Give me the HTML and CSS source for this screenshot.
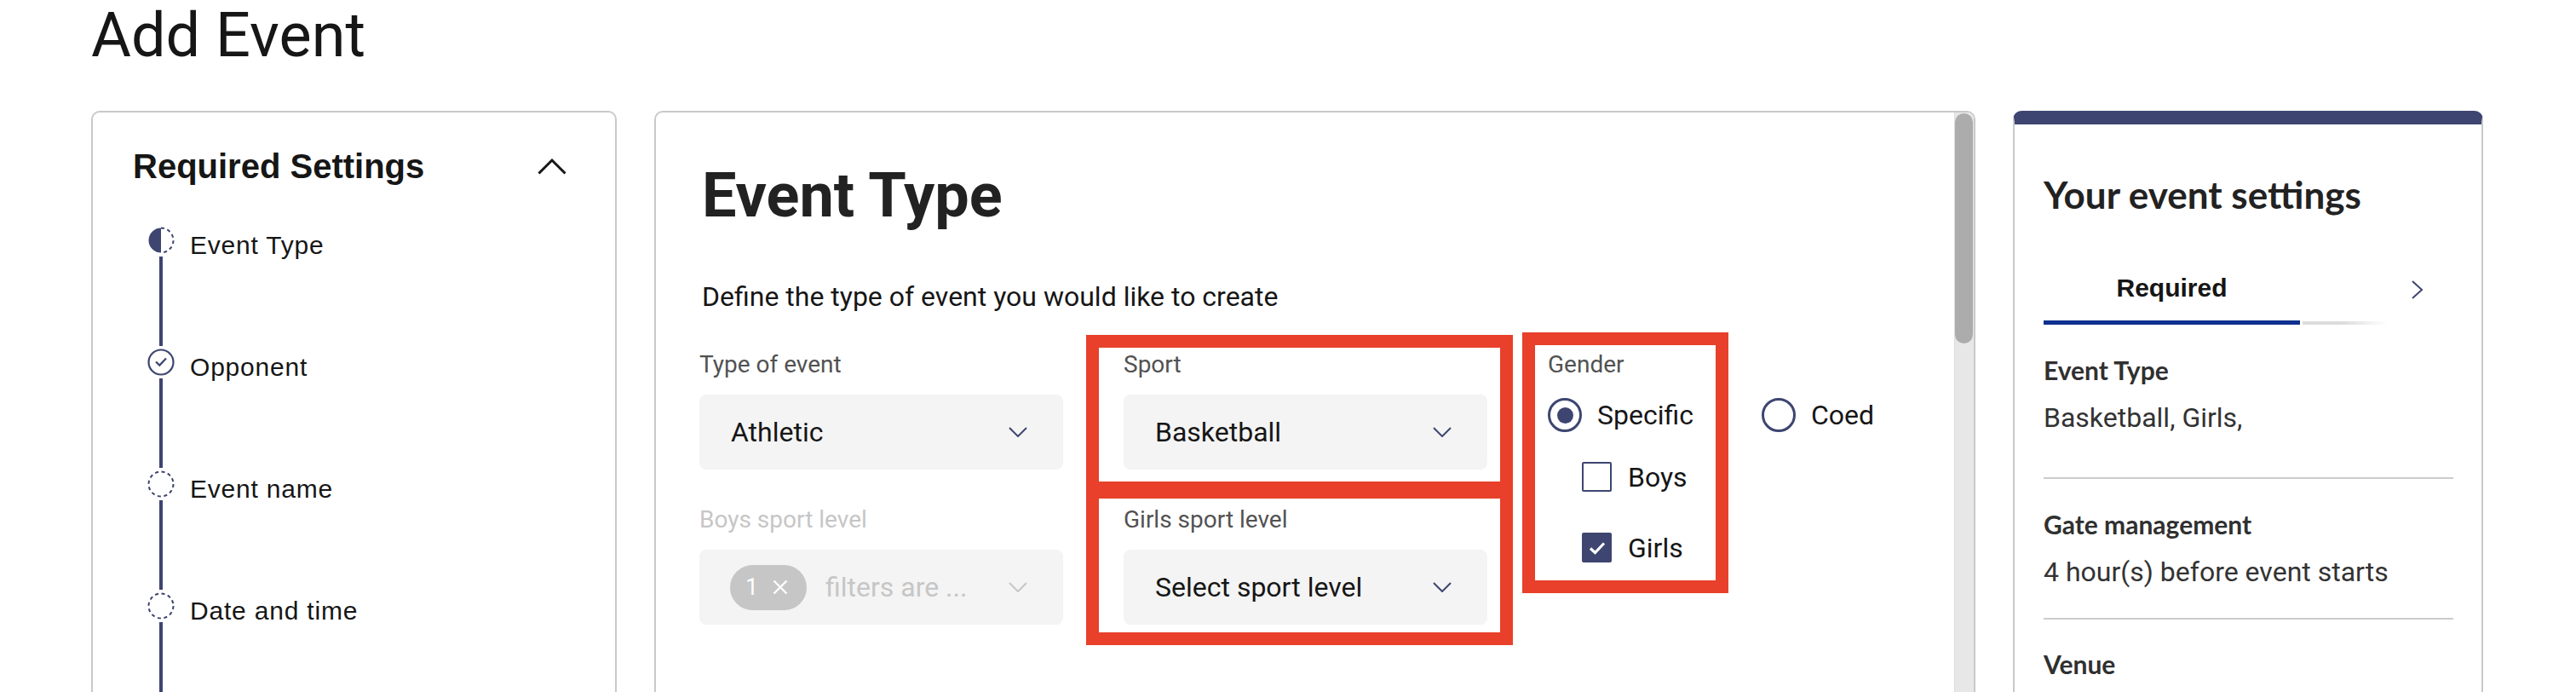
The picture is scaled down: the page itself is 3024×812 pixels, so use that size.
FILE: index.html
```html
<!DOCTYPE html>
<html lang="en">
<head>
<meta charset="utf-8">
<title>Add Event</title>
<link rel="stylesheet" href="styles.css">
</head>
<body>
<div class="page">
  <h1 class="page-title">Add Event</h1>
  <div class="layout">
    <aside class="card steps-card">
      <div class="steps-head">
        <h2 class="steps-title">Required Settings</h2>
        <svg class="chev-up" width="34" height="20" viewBox="0 0 34 20"><path d="M1.5 18.5 L17 3 L32.5 18.5" fill="none" stroke="#161616" stroke-width="3"/></svg>
      </div>
      <ol class="steps">
        <li class="step">
          <div class="rail">
            <svg width="32" height="32" viewBox="0 0 32 32"><path d="M16 1.5 A14.5 14.5 0 0 0 16 30.5 Z" fill="#3d4570"/><path d="M16 1.5 A14.5 14.5 0 0 1 16 30.5" fill="none" stroke="#3d4570" stroke-width="2" stroke-dasharray="4 3.6"/></svg>
            <span class="rail-line"></span>
          </div>
          <span class="step-label">Event Type</span>
        </li>
        <li class="step">
          <div class="rail">
            <svg width="32" height="32" viewBox="0 0 32 32"><circle cx="16" cy="16" r="14.5" fill="none" stroke="#3d4570" stroke-width="2.2"/><path d="M10 15.5 L14.3 19.6 L22 11.5" fill="none" stroke="#3d4570" stroke-width="2.2"/></svg>
            <span class="rail-line"></span>
          </div>
          <span class="step-label">Opponent</span>
        </li>
        <li class="step">
          <div class="rail">
            <svg width="32" height="32" viewBox="0 0 32 32"><circle cx="16" cy="16" r="14.5" fill="none" stroke="#3d4570" stroke-width="2" stroke-dasharray="4 3.6"/></svg>
            <span class="rail-line"></span>
          </div>
          <span class="step-label">Event name</span>
        </li>
        <li class="step">
          <div class="rail">
            <svg width="32" height="32" viewBox="0 0 32 32"><circle cx="16" cy="16" r="14.5" fill="none" stroke="#3d4570" stroke-width="2" stroke-dasharray="4 3.6"/></svg>
            <span class="rail-line"></span>
          </div>
          <span class="step-label">Date and time</span>
        </li>
      </ol>
    </aside>

    <main class="card form-card">
      <div class="form-body">
        <h2 class="form-title">Event Type</h2>
        <p class="form-desc">Define the type of event you would like to create</p>
        <div class="form-grid">
          <div class="field">
            <label class="field-label">Type of event</label>
            <div class="select">
              <span>Athletic</span>
              <svg class="chev" width="22" height="12" viewBox="0 0 22 12"><path d="M1 1 L11 11 L21 1" fill="none" stroke="#3d4570" stroke-width="2"/></svg>
            </div>
          </div>
          <div class="field">
            <label class="field-label">Sport</label>
            <div class="select">
              <span>Basketball</span>
              <svg class="chev" width="22" height="12" viewBox="0 0 22 12"><path d="M1 1 L11 11 L21 1" fill="none" stroke="#3d4570" stroke-width="2"/></svg>
            </div>
          </div>
          <div class="field gender">
            <label class="field-label">Gender</label>
            <div class="radio-row">
              <div class="radio-opt"><span class="radio checked"></span><span>Specific</span></div>
              <div class="radio-opt"><span class="radio"></span><span>Coed</span></div>
            </div>
            <div class="check-list">
              <div class="check-opt"><span class="checkbox"></span><span>Boys</span></div>
              <div class="check-opt"><span class="checkbox checked"><svg width="22" height="18" viewBox="0 0 22 18"><path d="M3 9.5 L8.5 14.5 L19 3.5" fill="none" stroke="#fff" stroke-width="3.2"/></svg></span><span>Girls</span></div>
            </div>
          </div>
          <div class="field disabled">
            <label class="field-label">Boys sport level</label>
            <div class="select">
              <span class="multi">
                <span class="pill"><span>1</span><svg width="18" height="18" viewBox="0 0 18 18"><path d="M1.5 1.5 L16.5 16.5 M16.5 1.5 L1.5 16.5" stroke="#fff" stroke-width="2.4"/></svg></span>
                <span class="placeholder">filters are ...</span>
              </span>
              <svg class="chev" width="22" height="12" viewBox="0 0 22 12"><path d="M1 1 L11 11 L21 1" fill="none" stroke="#c6c6c6" stroke-width="2"/></svg>
            </div>
          </div>
          <div class="field">
            <label class="field-label">Girls sport level</label>
            <div class="select">
              <span>Select sport level</span>
              <svg class="chev" width="22" height="12" viewBox="0 0 22 12"><path d="M1 1 L11 11 L21 1" fill="none" stroke="#3d4570" stroke-width="2"/></svg>
            </div>
          </div>
          <span class="annot annot-sport"></span>
          <span class="annot annot-girls"></span>
          <span class="annot annot-gender"></span>
        </div>
      </div>
      <div class="scrollbar"><div class="thumb"></div></div>
    </main>

    <aside class="card summary-card">
      <h2 class="summary-title">Your event settings</h2>
      <div class="tab-strip">
        <div class="tab">Required</div>
        <div class="tab-rest"></div>
        <svg class="chev-right" width="16" height="22" viewBox="0 0 16 22"><path d="M2 1 L13 11 L2 21" fill="none" stroke="#3d4570" stroke-width="2"/></svg>
      </div>
      <section class="sum-section first">
        <h3 class="sum-title">Event Type</h3>
        <p class="sum-value">Basketball, Girls,</p>
      </section>
      <section class="sum-section">
        <h3 class="sum-title">Gate management</h3>
        <p class="sum-value">4 hour(s) before event starts</p>
      </section>
      <section class="sum-section last">
        <h3 class="sum-title">Venue</h3>
      </section>
    </aside>
  </div>
</div>
</body>
</html>
```

FILE: styles.css
```css
html, body {
  margin: 0;
  padding: 0;
  overflow: hidden;
  background: #ffffff;
}

body {
  font-family: Roboto, "Liberation Sans", sans-serif;
  color: #161616;
}

.page {
  padding-left: 107px;
  height: 812px;
}

.page-title {
  margin: 0;
  padding-top: 6px;
  font-family: Roboto, sans-serif;
  font-weight: 400;
  font-size: 72px;
  line-height: 72px;
  color: #161616;
}

.layout {
  margin-top: 52px;
  display: grid;
  grid-template-columns: 617px 1551px 552px;
  column-gap: 44px;
  align-items: start;
}

.card {
  box-sizing: border-box;
  height: 760px;
  border: 2px solid #c9c9c9;
  border-radius: 10px;
  background: #fff;
  overflow: hidden;
}

/* ---------- left steps card ---------- */
.steps-card {
  padding: 40px 57px 0 47px;
}

.steps-head {
  display: flex;
  align-items: center;
  justify-content: space-between;
}

.steps-title {
  margin: 0;
  font-family: "Liberation Sans", Arial, sans-serif;
  font-weight: 700;
  font-size: 40px;
  line-height: 46px;
  color: #161616;
}

.chev-up {
  display: block;
}

.steps {
  list-style: none;
  margin: 48px 0 0 0;
  padding: 0 0 0 17px;
}

.step {
  display: flex;
  gap: 18px;
  height: 143px;
}

.rail {
  display: flex;
  flex-direction: column;
  align-items: center;
  width: 32px;
}

.rail svg {
  display: block;
  flex: none;
}

.rail-line {
  display: block;
  width: 4px;
  flex: 1;
  margin: 3px 0;
  background: #3d4570;
}

.step-label {
  margin-top: 5px;
  font-family: "Liberation Sans", Arial, sans-serif;
  font-size: 30px;
  line-height: 34px;
  letter-spacing: 0.8px;
  color: #161616;
}

/* ---------- middle form card ---------- */
.form-card {
  display: flex;
}

.form-body {
  flex: 1;
  padding: 55px 0 0 51px;
}

.form-title {
  margin: 0 0 0 3px;
  font-family: Roboto, sans-serif;
  font-weight: 700;
  font-size: 72px;
  line-height: 86px;
  color: #222222;
}

.form-desc {
  margin: 57px 0 0 3px;
  font-size: 32px;
  line-height: 36px;
  color: #161616;
}

.form-grid {
  position: relative;
  margin-top: 45px;
  display: grid;
  grid-template-columns: 427px 427px auto;
  column-gap: 71px;
  row-gap: 42px;
  align-items: start;
}

.field-label {
  display: block;
  font-size: 28px;
  line-height: 34px;
  color: #525252;
}

.select {
  box-sizing: border-box;
  margin-top: 18px;
  height: 88px;
  display: flex;
  align-items: center;
  justify-content: space-between;
  padding: 0 42px 0 37px;
  background: #f4f4f4;
  border-radius: 8px;
  font-size: 32px;
  color: #161616;
}

.chev {
  display: block;
  flex: none;
}

.field.disabled .field-label {
  color: #c6c6c6;
}

.field.disabled .select {
  padding-left: 36px;
}

.multi {
  display: flex;
  align-items: center;
  gap: 22px;
}

.pill {
  box-sizing: border-box;
  width: 90px;
  height: 53px;
  border-radius: 27px;
  background: #c6c6c6;
  color: #ffffff;
  display: flex;
  align-items: center;
  gap: 17px;
  padding-left: 18px;
  font-size: 27px;
}

.pill svg {
  display: block;
}

.placeholder {
  color: #c6c6c6;
  font-size: 32px;
}

.gender {
  grid-column: 3;
  grid-row: 1 / 3;
}

.radio-row {
  margin-top: 22px;
  display: flex;
  align-items: center;
  gap: 80px;
}

.radio-opt,
.check-opt {
  display: flex;
  align-items: center;
  font-size: 32px;
  line-height: 40px;
  color: #161616;
}

.radio-opt {
  gap: 18px;
}

.radio {
  box-sizing: border-box;
  width: 40px;
  height: 40px;
  border: 3px solid #3d4570;
  border-radius: 50%;
  display: flex;
  align-items: center;
  justify-content: center;
}

.radio.checked::after {
  content: "";
  width: 19px;
  height: 19px;
  border-radius: 50%;
  background: #3d4570;
}

.check-list {
  padding-left: 40px;
  margin-top: 35px;
  display: flex;
  flex-direction: column;
  gap: 48px;
}

.check-opt {
  gap: 19px;
  height: 35px;
}

.checkbox {
  box-sizing: border-box;
  width: 35px;
  height: 35px;
  border: 2.5px solid #3d4570;
  border-radius: 2px;
  display: flex;
  align-items: center;
  justify-content: center;
}

.checkbox.checked {
  background: #3d4570;
}

.checkbox svg {
  display: block;
}

/* annotation boxes drawn over the form */
.annot {
  position: absolute;
  box-sizing: border-box;
  border: 15px solid #e8402a;
  pointer-events: none;
}

.annot-sport {
  left: 454px;
  top: -18px;
  width: 501px;
  height: 187px;
}

.annot-girls {
  left: 454px;
  top: 159px;
  width: 501px;
  height: 187px;
}

.annot-gender {
  left: 966px;
  top: -21px;
  width: 242px;
  height: 306px;
}

.scrollbar {
  width: 22px;
  flex: none;
  background: #e7e7e7;
  border-left: 1px solid #dcdcdc;
}

.thumb {
  margin: 1px 1px 0 0;
  height: 270px;
  border-radius: 11px;
  background: #acacac;
}

/* ---------- right summary card ---------- */
.summary-card {
  border-top: 16px solid #3d4570;
  padding: 56px 33px 0 34px;
}

.summary-title {
  margin: 0;
  font-family: Lato, sans-serif;
  font-weight: 700;
  font-size: 44px;
  line-height: 53px;
  color: #222222;
}

.tab-strip {
  margin-top: 66px;
  display: flex;
  align-items: flex-start;
}

.tab {
  width: 301px;
  text-align: center;
  padding-bottom: 21px;
  border-bottom: 5px solid #10308f;
  font-family: "Liberation Sans", Arial, sans-serif;
  font-weight: 700;
  font-size: 30px;
  line-height: 34px;
  color: #161616;
}

.tab-rest {
  align-self: flex-end;
  margin-left: 3px;
  width: 100px;
  height: 4px;
  background: linear-gradient(to right, #dcdcdc 0%, #dcdcdc 45%, rgba(220, 220, 220, 0) 100%);
}

.chev-right {
  display: block;
  margin: 8px 0 0 27px;
}

.sum-section {
  border-bottom: 2px solid #cccccc;
  padding: 35px 0 36px;
}

.sum-section.first {
  padding-bottom: 52px;
}

.sum-section.last {
  border-bottom: none;
  padding-top: 34px;
}

.sum-title {
  margin: 0;
  font-family: Lato, sans-serif;
  font-weight: 700;
  font-size: 30px;
  line-height: 36px;
  color: #303030;
}

.sum-value {
  margin: 20px 0 0;
  font-size: 32px;
  line-height: 36px;
  color: #333333;
}
```
